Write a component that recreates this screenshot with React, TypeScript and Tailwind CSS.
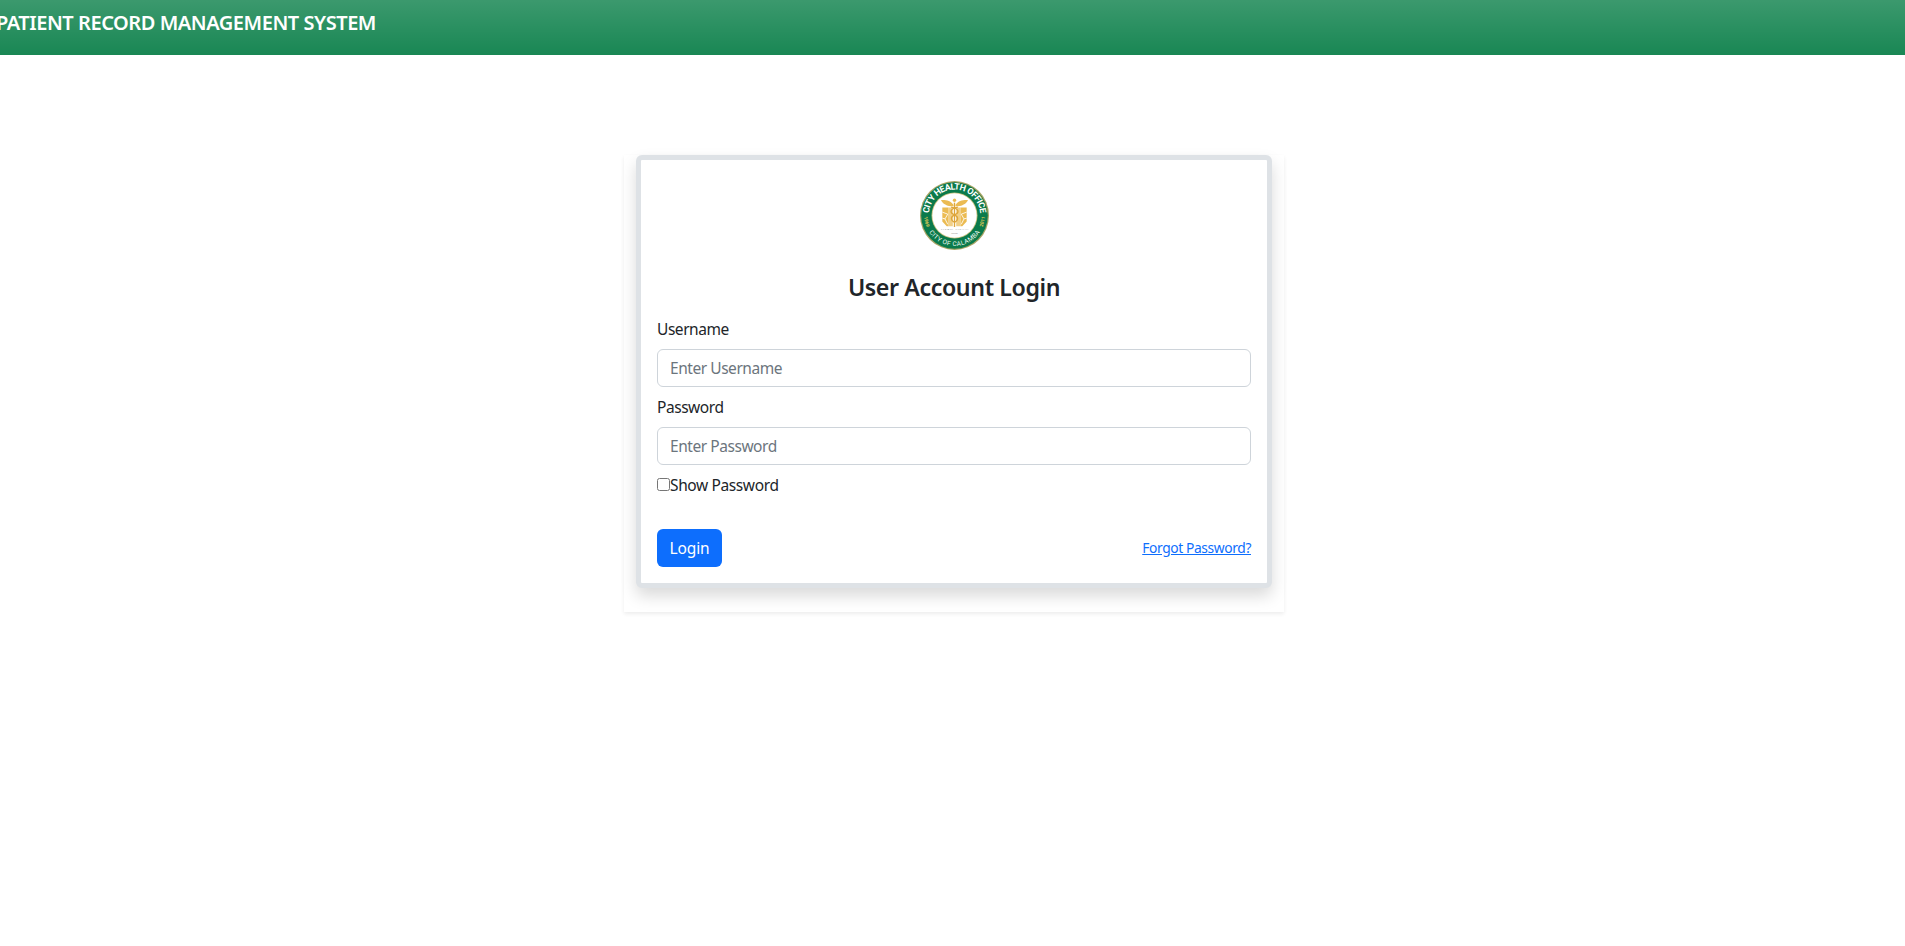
import { useState } from "react";

function Seal() {
  return (
    <svg viewBox="0 0 204 204" className="block size-[69px]" role="img" aria-label="City Health Office">
      <defs>
        <path id="arcTop" d="M 29.3 123.1 A 76 76 0 1 1 174.7 123.1" />
        <path id="arcBottom" d="M 12 102 A 90 90 0 0 0 192 102" />
      </defs>
      <circle cx="102" cy="102" r="102" fill="#a9a465" />
      <circle cx="102" cy="102" r="98.5" fill="#0b7a4b" />
      <circle cx="102" cy="102" r="68" fill="#c9bf7c" />
      <circle cx="102" cy="102" r="65.5" fill="#ffffff" />
      <g fontFamily="'Roboto', 'Liberation Sans', sans-serif" fill="#ffffff">
        <text fontSize="26" fontWeight="700" textAnchor="middle">
          <textPath href="#arcTop" startOffset="50%" textLength="228" lengthAdjust="spacing">CITY HEALTH OFFICE</textPath>
        </text>
        <text fontSize="19" fontWeight="400" textAnchor="middle" fill="#eef8f2">
          <textPath href="#arcBottom" startOffset="50%" textLength="178" lengthAdjust="spacing">CITY OF CALAMBA</textPath>
        </text>
        <text fontSize="14" fontWeight="700" fill="#e2cc55" textAnchor="middle" transform="translate(15 121) rotate(77)">1969</text>
        <text fontSize="14" fontWeight="700" fill="#e2cc55" textAnchor="middle" transform="translate(189 121) rotate(-77)">2011</text>
      </g>
      <g fill="#ebbb52">
        <path d="M66 78H84V134H79L66 120Z M138 78H120V134H125L138 120Z" />
        <path d="M84 78H97V134H84Z M107 78H120V134H107Z" opacity="0.7" />
        <path d="M99 70 C86 54 76 57 62 56 C66 67 80 75 99 75Z M105 70 C118 54 128 57 142 56 C138 67 124 75 105 75Z" />
        <circle cx="102" cy="57" r="5" />
      </g>
      <g fill="none" stroke="#ffffff" strokeWidth="2.5">
        <path d="M66 92L82 98L74 112L82 128 M66 110L74 112 M138 92L122 98L130 112L122 128 M138 110L130 112" />
      </g>
      <g fill="none" stroke="#dda53a" strokeWidth="4">
        <path d="M102 64V136" />
        <path d="M92 77 C118 82 116 94 102 100 C88 106 92 118 102 122 M112 77 C86 82 88 94 102 100 C116 106 112 118 102 122" />
      </g>
      <g fontFamily="'Liberation Serif', serif" fontSize="8" fill="#7d7d75" textAnchor="middle">
        <text x="102" y="146" textLength="80">Prompt Project</text>
        <text x="102" y="157">Precise</text>
      </g>
    </svg>
  );
}

const inputClass =
  "block h-[38px] w-full rounded-md border border-[#ced4da] bg-white px-3 text-[15.5px] tracking-[-0.45px] text-[#212529] outline-none placeholder:text-[#6c757d] placeholder:opacity-100";

export default function App() {
  const [visible, setVisible] = useState(false);
  return (
    <div className="min-h-screen overflow-hidden bg-white font-['Noto_Sans','Open_Sans',sans-serif] text-[15.5px] leading-6 tracking-[-0.45px] text-[#212529]">
      <header className="flex h-[55px] items-start bg-[#198754] bg-linear-to-b from-white/15 to-transparent pt-2">
        <div className="flex w-[376px] justify-end whitespace-nowrap text-[20px] leading-[30px] font-semibold tracking-[-0.45px] text-white">
          PATIENT RECORD MANAGEMENT SYSTEM
        </div>
      </header>
      <main className="mt-[100px] ml-[624px] w-[660px] px-3 pb-6 shadow-[0_2px_4px_rgba(0,0,0,0.075)]">
        <form
          className="h-[433px] rounded-md border-[5px] border-[#dee2e6] bg-white px-4 pt-[21px] shadow-[0_8px_16px_rgba(0,0,0,0.15)]"
          onSubmit={(e) => e.preventDefault()}
        >
          <div className="flex justify-center">
            <Seal />
          </div>
          <h1 className="mt-[23px] text-center text-[23.2px] leading-[29px] font-semibold tracking-[-0.4px]">
            User Account Login
          </h1>
          <label htmlFor="username" className="mt-[15px] mb-2 block">
            Username
          </label>
          <input id="username" className={inputClass} placeholder="Enter Username" />
          <label htmlFor="password" className="my-2 block">
            Password
          </label>
          <input id="password" type={visible ? "text" : "password"} className={inputClass} placeholder="Enter Password" />
          <label className="mt-2 flex items-center">
            <input type="checkbox" className="mb-px size-[13px]" checked={visible} onChange={() => setVisible(!visible)} />
            <span className="tracking-[-0.38px]">Show Password</span>
          </label>
          <div className="mt-8 flex items-center justify-between">
            <button className="h-[38px] w-[65px] rounded-md bg-[#0d6efd] tracking-[-0.1px] text-white">Login</button>
            <a href="#" className="text-[13.8px] tracking-[-0.38px] text-[#0d6efd] underline">
              Forgot Password?
            </a>
          </div>
        </form>
      </main>
    </div>
  );
}
